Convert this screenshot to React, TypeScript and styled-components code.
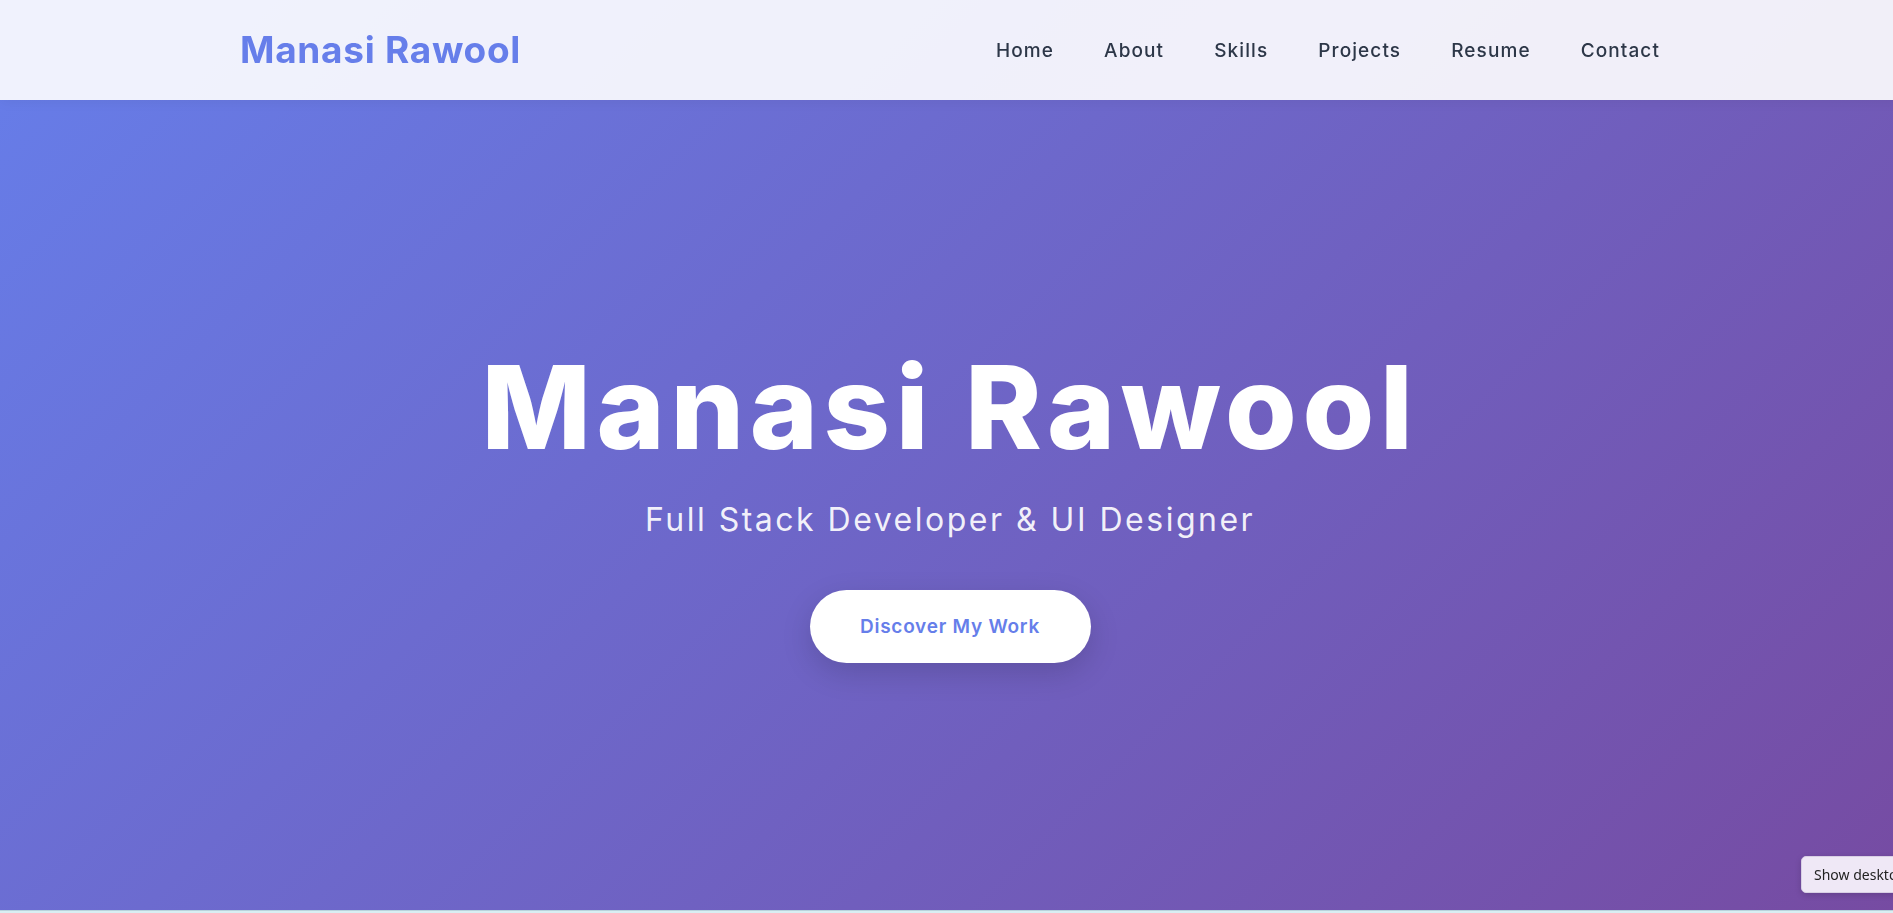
import React from "react";
import styled, { createGlobalStyle } from "styled-components";

const GlobalStyle = createGlobalStyle`
  html, body { margin: 0; padding: 0; overflow: hidden; }
  body { font-family: Inter, "Open Sans", sans-serif; background: #d9eef2; }
  * { box-sizing: border-box; }
`;

const Page = styled.div`
  width: 1900px;
  position: relative;
`;

const Header = styled.header`
  position: fixed;
  top: 0;
  left: 0;
  width: 1900px;
  height: 100px;
  background: rgba(255, 255, 255, 0.9);
  box-shadow: 0 2px 12px rgba(0, 0, 0, 0.05);
  z-index: 10;
`;

const HeaderInner = styled.div`
  max-width: 1420px;
  height: 100%;
  margin: 0 auto;
  display: flex;
  align-items: center;
  justify-content: space-between;
`;

const Logo = styled.a`
  font-family: Inter, sans-serif;
  font-weight: 700;
  font-size: 37px;
  letter-spacing: 0.7px;
  color: #667eea;
  text-decoration: none;
  margin-top: -2px;
`;

const Nav = styled.nav`
  display: flex;
  gap: 50px;
`;

const NavLink = styled.a`
  font-family: Inter, sans-serif;
  font-weight: 500;
  font-size: 19px;
  letter-spacing: 1.1px;
  color: #2d3748;
  text-decoration: none;
`;

const Hero = styled.section`
  height: 910px;
  padding-top: 100px;
  padding-bottom: 9px;
  background: linear-gradient(135deg, #667eea 0%, #764ba2 100%);
  display: flex;
  flex-direction: column;
  align-items: center;
  justify-content: center;
  color: #fff;
  text-align: center;
`;

const Title = styled.h1`
  margin: 0;
  font-family: Inter, sans-serif;
  font-weight: 800;
  font-size: 116px;
  line-height: 1.2;
  letter-spacing: 5.6px;
`;

const Subtitle = styled.p`
  margin: 19px 0 0;
  font-family: Inter, sans-serif;
  font-weight: 400;
  font-size: 32px;
  line-height: 1.5;
  letter-spacing: 2.5px;
  color: rgba(255, 255, 255, 0.92);
`;

const CTA = styled.a`
  margin-top: 46px;
  width: 281px;
  height: 73px;
  border-radius: 40px;
  background: #fff;
  color: #667eea;
  font-family: Inter, sans-serif;
  font-weight: 600;
  font-size: 19px;
  letter-spacing: 0.75px;
  display: flex;
  align-items: center;
  justify-content: center;
  text-decoration: none;
  box-shadow: 0 10px 30px rgba(0, 0, 0, 0.15);
`;

const NextSection = styled.section`
  height: 40px;
  background: #d9eef2;
  border-top: 1px solid #b9d3dc;
`;

const Tooltip = styled.div`
  position: fixed;
  left: 1801px;
  top: 856px;
  height: 37px;
  padding: 0 12px;
  display: flex;
  align-items: center;
  background: #efe8f6;
  border: 1px solid #d8cfe4;
  border-radius: 5px;
  box-shadow: 0 2px 6px rgba(0, 0, 0, 0.15);
  font-family: "Noto Sans", sans-serif;
  font-size: 14px;
  color: #222;
  white-space: nowrap;
`;

export default function App() {
  const links = ["Home", "About", "Skills", "Projects", "Resume", "Contact"];
  return (
    <Page>
      <GlobalStyle />
      <Header>
        <HeaderInner>
          <Logo href="#">Manasi Rawool</Logo>
          <Nav>
            {links.map((l) => (
              <NavLink key={l} href="#">
                {l}
              </NavLink>
            ))}
          </Nav>
        </HeaderInner>
      </Header>
      <Hero>
        <Title>Manasi Rawool</Title>
        <Subtitle>Full Stack Developer &amp; UI Designer</Subtitle>
        <CTA href="#">Discover My Work</CTA>
      </Hero>
      <NextSection />
      <Tooltip>Show desktop</Tooltip>
    </Page>
  );
}
